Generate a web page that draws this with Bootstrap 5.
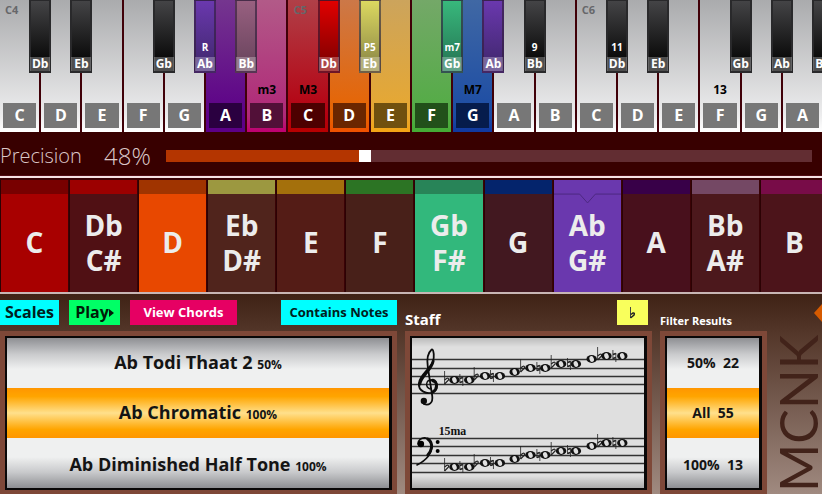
<!DOCTYPE html>
<html lang="en">
<head>
<meta charset="utf-8">
<meta name="viewport" content="width=device-width, initial-scale=1">
<title>Scale finder</title>
<link href="https://cdn.jsdelivr.net/npm/bootstrap@5.3.0/dist/css/bootstrap.min.css" rel="stylesheet">
<style>
body{font-family:"Open Sans","Noto Sans",sans-serif;background:#380000;color:#fff;min-height:100vh}
button{font-family:inherit}
/* keyboard */
.piano{width:calc(100% + 2px);height:132px;background:#400008}
.pkey{flex:1 1 0;min-width:0;margin-right:2px;background:linear-gradient(var(--a,#aaabad),var(--b,#ededee) 88%,var(--c,#fff))}
.octave{left:5px;top:2px;font-size:11px;line-height:16px;color:#66676a;font-weight:700}
.degree{left:0;right:0;top:82px;font-size:12px;line-height:16px;font-weight:700;color:#000;text-align:center}
.natural-label{left:3px;right:3px;bottom:4px;height:25px;line-height:25px;font-size:16px;font-weight:700;text-align:center;background:var(--l,#777)}
.sharp{right:-12px;top:0;width:22px;height:73px;z-index:2;border:2px solid #29292b;border-top-width:1px;background:linear-gradient(var(--a,#444446),var(--b,#0c0c0c) 80%)}
.sharp.tinted{border-color:rgba(50,30,60,.65);background-clip:border-box}
.sharp b{left:-1px;right:-1px;bottom:0;height:14px;font-size:12px;line-height:14px;text-align:center;background:rgba(255,255,255,.28)}
.sharp i{left:-2px;right:-2px;top:38px;font-size:10px;line-height:16px;font-style:normal;font-weight:700;text-align:center}
/* precision */
.precision{height:44px;padding:4px 10px 0 0;color:#dcc8c8;font-weight:300;border-bottom:1px solid #500c14}
.precision label{font-size:20px;width:104px}
.precision output{font-size:24px;width:62px}
.precision input{-webkit-appearance:none;appearance:none;height:12px;min-width:0;background:linear-gradient(90deg,#b43500 31%,#622d32 31%)}
.precision input::-webkit-slider-thumb{-webkit-appearance:none;width:12px;height:12px;background:#fff}
/* note selector */
.notes-wrap{border-top:2px solid #f5e2e4;border-bottom:2px solid #c8b6b4}
.notes{width:calc(100% + 7px);height:114px;padding-top:2px;background:#3a0205}
.note{flex:1 1 0;min-width:0;margin:0 1px 0 0;border:0;border-left:1px solid #2c0204;padding:13px 0 0;background:linear-gradient(var(--h) 14px,var(--n) 14px);color:#ececec;font-size:28px;line-height:35px;font-weight:700}
.pointer-line{left:0;top:13px;width:100%;height:12px}
/* lower area */
.lower{display:grid;grid-template-columns:397fr 247fr 107fr 47fr;grid-template-rows:37px auto;column-gap:8px;background:linear-gradient(#3f2215,#54372a 20%,#a08a80)}
.tool{height:25px;border:0;padding:0;font-weight:700;line-height:25px;font-size:13px;flex:none}
.toolbar-row{gap:10px}
.cyan{background:#00ffff;color:#002020}
.green{background:#00ff66;color:#001c08}
.pink{background:#e60063;color:#fff}
.yellow{background:#f9ff5c;color:#222;width:31px}
.w-scales{width:59px;font-size:16px}.w-play{width:51px;font-size:16px}.w-chords{width:107px}.w-contains{width:116px}
.heading-staff{font-size:15px;line-height:20px;margin:0;padding-top:12px}
.heading-filter{font-size:11px;line-height:16px;margin:0}
.frame{background:#7e4838;padding:5px;padding-bottom:4px}
.screen{border:2px solid #0a0808;border-right-width:3px;height:154px;overflow:hidden}
.wheel{display:grid;grid-template-rows:repeat(3,1fr)}
.screen button{border:0;padding:0;color:#141414;font-weight:700;white-space:pre}
.top-row{background:linear-gradient(#8e8f93,#c9cacc 32%,#eff0f0 62%)}
.mid-row{background:linear-gradient(#ff9600,#ffa500 17%,#ffe08c 50%,#ffa500 83%,#ff9600)}
.screen .end-row{padding-top:4px;background:linear-gradient(#eff0f0 38%,#c9cacc 68%,#8e8f93)}
.scale-list button{font-size:18px;line-height:24px}.scale-list small{font-size:12px}
.filter-list button{font-size:14px;line-height:20px}
.sheet{background:linear-gradient(#bbb,#dfdfdf 6%,#dfdfdf 92%,#aaa);}
.brand{writing-mode:vertical-rl;transform:rotate(180deg);font-family:Lato,sans-serif;font-size:52px;line-height:47px;color:#42231a;white-space:nowrap;margin-bottom:2px}
.diamond{right:0;top:9px;width:8px;height:20px}
</style>
</head>
<body class="d-flex flex-column overflow-x-hidden">
<div class="overflow-hidden"><div class="piano d-flex" id="piano"></div></div>

<div class="precision d-flex align-items-center">
<label for="precision">Precision</label><output for="precision">48%</output>
<input class="flex-grow-1" type="range" id="precision" min="0" max="100" step="0.5" value="30.5">
</div>

<div class="notes-wrap overflow-hidden"><div class="notes d-flex" id="notes"></div></div>

<main class="lower flex-grow-1 position-relative overflow-hidden">
<div class="toolbar-row d-flex align-items-center">
<button class="tool cyan w-scales">Scales</button>
<button class="tool green w-play d-flex align-items-center justify-content-center">Play<svg width="5" height="8" viewBox="0 0 5 8" aria-hidden="true"><path d="M0 0L5 4L0 8Z" fill="#001c08"/></svg></button>
<button class="tool pink w-chords">View Chords</button>
<button class="tool cyan w-contains ms-auto">Contains Notes</button>
</div>
<div class="d-flex justify-content-between align-items-center">
<h2 class="heading-staff fw-bold">Staff</h2>
<button class="tool yellow me-1 d-flex align-items-center justify-content-center" aria-label="Flats"><svg width="8" height="14" viewBox="0 0 8 14" aria-hidden="true"><path d="M1.500 1V12" fill="none" stroke="#444"/><path d="M1.500 12L5 9Q6 6.500 4 7L2 8.500" fill="none" stroke="#222" stroke-width="1.500"/></svg></button>
</div>
<div class="d-flex align-items-center"><h2 class="heading-filter fw-bold pt-3">Filter Results</h2></div>
<div></div>

<section class="frame"><div class="screen scale-list wheel">
<button class="top-row">Ab Todi Thaat 2 <small>50%</small></button>
<button class="mid-row">Ab Chromatic <small>100%</small></button>
<button class="end-row">Ab Diminished Half Tone <small>100%</small></button>
</div></section>

<section class="frame"><div class="screen sheet">
<svg class="w-100 h-100 d-block" viewBox="0 0 235 150" preserveAspectRatio="none" role="img" aria-label="Chromatic scale on treble and bass staves">
<defs>
<g id="whole"><ellipse rx="5.300" ry="3.900" fill="#111"/><ellipse rx="2.200" ry="3" transform="rotate(-20)" fill="#dfdfdf"/></g>
<g id="flat" fill="none" stroke="#222"><path d="M-2 -9V4" stroke-width=".8"/><path d="M-2 4L2 0Q2.500 -2.500 0 -1.500L-2 0" stroke-width="1.200"/></g>
<g id="nat" fill="none" stroke="#222"><path d="M-1.500 -6V3M1.500 -3V6" stroke-width=".8"/><path d="M-1.500 -1.500L1.500 -2.500M-1.500 2.500L1.500 1.500" stroke-width="1.800"/></g>
</defs>
<path d="M0 21.500H235M0 30.500H235M0 38.500H235M0 46.500H235M0 55.500H235M0 100.500H235M0 108.500H235M0 117.500H235M0 125.500H235M0 134.500H235" stroke="#333" stroke-width="1.300"/>
<g fill="none" stroke="#0c0c0c" stroke-linecap="round">
<path d="M19.500 42C14 42 13 49 18.500 51" stroke-width="1.400"/>
<path d="M19.500 42C25 40 28 50 22 54C15 57 6 53 7 45C8 36 21 30 22 20C22.500 14 21 10 19.500 12C16 15 15 22 16 29L20.500 58C21.500 65 17 68 12 66" stroke-width="1.800"/>
<path d="M8 46C9 38 20 32 21.500 23M21 43C26 44 26 51 21 54" stroke-width="2.800"/>
</g><circle cx="12" cy="63" r="3.200" fill="#0c0c0c"/>
<g fill="none" stroke="#0c0c0c" stroke-linecap="round"><path d="M6 106C6 98 20 97 20 108C20 117 13 123 5 127" stroke-width="1.600"/><path d="M16 101C23 106 19 114 16 117" stroke-width="3"/></g>
<circle cx="9" cy="106" r="3.300"/><circle cx="26" cy="104" r="2"/><circle cx="26" cy="113" r="2"/>
<text x="27" y="97" font-family="Liberation Serif,serif" font-weight="700" font-size="12" fill="#111">15ma</text>
<g id="run"></g>
</svg></div></section>

<section class="frame"><div class="screen filter-list wheel">
<button class="top-row">50%  22</button>
<button class="mid-row">All  55</button>
<button class="end-row">100%  13</button>
</div></section>
<div class="brand">MCNK</div>
<svg class="diamond position-absolute" viewBox="0 0 8 20" aria-hidden="true"><path d="M8 1L0 10L8 19Z" fill="#d65a00"/></svg>
</main>

<script>
// name, key colours (top, bottom, edge, label), degree, octave mark, sharp: [name, top, bottom, degree]
const keys=[
['C',,,'C4',['Db']],['D',,,,['Eb']],['E'],['F',,,,['Gb']],['G',,,,['Ab','#6a38ae','#472a78','R']],
['A',['#75368f','#5c0087','#5c0087','#2a0040'],,,['Bb','#986080','#704862']],
['B',['#b25a88','#b02878','#c00070','#521038'],'m3'],
['C',['#b04048','#b50010','#b80000','#4d0000'],'M3','C5',['Db','#e00000','#8c0000']],
['D',['#cc7848','#e86400','#f05000','#6b2600'],,,['Eb','#dcd860','#98944a','P5']],
['E',['#cca45c','#e8a830','#f4a414','#70500f']],
['F',['#74a868','#52ac44','#44ac34','#22501a'],,,['Gb','#38b87c','#28805a','m7']],
['G',['#4068a4','#1c4ca4','#1038a0','#061c4c'],'M7',,['Ab','#6a38ae','#472a78']],
['A',,,,['Bb',,,'9']],['B'],['C',,,'C6',['Db',,,'11']],['D',,,,['Eb']],['E'],['F',,'13',,['Gb']],['G',,,,['Ab']],['A',,,,['Bb']]];
document.getElementById('piano').innerHTML=keys.map(([n,c,d,o,s])=>
`<div class="pkey position-relative"${c?` style="--a:${c[0]};--b:${c[1]};--c:${c[2]};--l:${c[3]}"`:''}>`+
(o?`<span class="octave position-absolute">${o}</span>`:'')+(d?`<span class="degree position-absolute">${d}</span>`:'')+
`<span class="natural-label position-absolute">${n}</span>`+
(s?`<div class="sharp position-absolute${s[1]?' tinted':''}" style="--a:${s[1]||'#444446'};--b:${s[2]||'#0c0c0c'}">${s[3]?`<i class="position-absolute">${s[3]}</i>`:''}<b class="position-absolute">${s[0]}</b></div>`:'')+'</div>').join('');
const notes=[['C','#780000','#a80000'],['Db<br>C#','#9c0000','#501014'],['D','#a03400','#e84800'],['Eb<br>D#','#9c9840','#50241c'],['E','#a4700c','#541c16'],['F','#2c7424','#482019'],['Gb<br>F#','#288458','#32b87c'],['G','#04246c','#421820'],['Ab<br>G#','#6a38ae','#6a38ae',1],['A','#380048','#48101c'],['Bb<br>A#','#744864','#4c181c'],['B','#780c48','#4c141a']];
document.getElementById('notes').innerHTML=notes.map(([t,h,n,p])=>`<button class="note position-relative" style="--h:${h};--n:${n}">${p?'<svg class="pointer-line position-absolute" viewBox="0 0 68 12" aria-hidden="true"><path d="M0 1H26L34 10L42 1H68" fill="none" stroke="#4c2880"/></svg>':''}${t}</button>`).join('');
const run=[['flat',35,42],['whole',43,42],['nat',50,42],['whole',58,42],['flat',65,38],['whole',74,38],['nat',81,38],['whole',89,38],['whole',104,34],['flat',112,30],['whole',120,30],['nat',128,30],['whole',135,30],['flat',143,26],['whole',151,26],['nat',159,26],['whole',166,26],['whole',182,21],['flat',190,18],['whole',197,18],['nat',205,18],['whole',213,18]];
document.getElementById('run').innerHTML=[0,87].map(o=>run.map(([k,x,y])=>`<use href="#${k}" x="${x}" y="${y+o}"/>`).join('')).join('');
</script>
<script src="https://cdn.jsdelivr.net/npm/bootstrap@5.3.0/dist/js/bootstrap.bundle.min.js"></script>
</body>
</html>
